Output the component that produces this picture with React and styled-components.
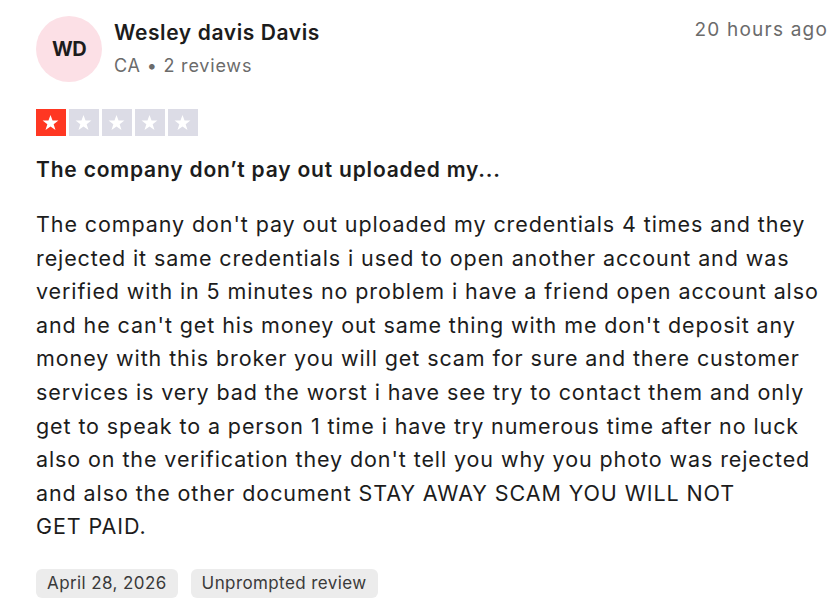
import React from "react";
import styled, { createGlobalStyle } from "styled-components";

const GlobalStyle = createGlobalStyle`
  body {
    margin: 0;
    background: #ffffff;
    font-family: Inter, "Noto Sans", sans-serif;
    color: #1c1c1c;
  }
`;

const Card = styled.div`
  width: 838px;
  height: 615px;
  box-sizing: border-box;
  padding: 16px 10px 0 36px;
  display: flex;
  flex-direction: column;
`;

const Header = styled.div`
  display: flex;
  align-items: flex-start;
  justify-content: space-between;
`;

const Consumer = styled.div`
  display: flex;
  align-items: center;
  gap: 12px;
`;

const Avatar = styled.div`
  width: 66px;
  height: 66px;
  border-radius: 50%;
  background: #fce0e6;
  display: flex;
  align-items: center;
  justify-content: center;
  font-size: 20px;
  font-weight: 700;
  color: #1c1c1c;
  letter-spacing: -0.5px;
`;

const NameBlock = styled.div`
  display: flex;
  flex-direction: column;
  gap: 10px;
  margin-top: -3px;
`;

const Name = styled.div`
  font-size: 21px;
  font-weight: 600;
  letter-spacing: 0.6px;
  color: #1c1c1c;
`;

const Meta = styled.div`
  font-size: 18px;
  letter-spacing: 0.8px;
  color: #6b6b6b;
`;

const Time = styled.div`
  font-size: 19px;
  letter-spacing: 1.2px;
  color: #6b6b6b;
  margin-top: 2px;
`;

const Stars = styled.div`
  display: flex;
  gap: 3.5px;
  margin-top: 27px;
`;

const StarBox = styled.div`
  width: 29.5px;
  height: 27px;
  background: ${(p) => (p.filled ? "#ff3722" : "#dcdce6")};
  display: flex;
  align-items: center;
  justify-content: center;
`;

const Title = styled.h2`
  margin: 21px 0 0;
  font-size: 21px;
  font-weight: 600;
  letter-spacing: 0.8px;
  color: #1c1c1c;
`;

const Body = styled.p`
  margin: 26px 0 0;
  font-size: 21.5px;
  line-height: 33.6px;
  letter-spacing: 0.9px;
  color: #1c1c1c;
  white-space: nowrap;
`;

const Tags = styled.div`
  display: flex;
  gap: 13px;
  margin-top: 25px;
`;

const Tag = styled.span`
  background: #ececec;
  border-radius: 6px;
  padding: 0 11px;
  height: 29px;
  display: flex;
  align-items: center;
  font-size: 17px;
  letter-spacing: 0.4px;
  color: #3a3a3a;
`;

const Star = () => (
  <svg width="19" height="19" viewBox="0 0 24 24">
    <path
      fill="#ffffff"
      d="M12 2.5l2.6 7.1h7.4l-6 4.5 2.3 7.4L12 17l-6.3 4.5L8 14.1 2 9.6h7.4z"
    />
  </svg>
);

const lines = [
  "The company don't pay out uploaded my credentials 4 times and they",
  "rejected it same credentials i used to open another account and was",
  "verified with in 5 minutes no problem i have a friend open account also",
  "and he can't get his money out same thing with me don't deposit any",
  "money with this broker you will get scam for sure and there customer",
  "services is very bad the worst i have see try to contact them and only",
  "get to speak to a person 1 time i have try numerous time after no luck",
  "also on the verification they don't tell you why you photo was rejected",
  "and also the other document STAY AWAY SCAM YOU WILL NOT",
  "GET PAID.",
];

export default function App() {
  return (
    <>
      <GlobalStyle />
      <Card>
        <Header>
          <Consumer>
            <Avatar>WD</Avatar>
            <NameBlock>
              <Name>Wesley davis Davis</Name>
              <Meta>CA • 2 reviews</Meta>
            </NameBlock>
          </Consumer>
          <Time>20 hours ago</Time>
        </Header>
        <Stars>
          {[0, 1, 2, 3, 4].map((i) => (
            <StarBox key={i} filled={i < 1}>
              <Star />
            </StarBox>
          ))}
        </Stars>
        <Title>The company don’t pay out uploaded my...</Title>
        <Body>
          {lines.map((l, i) => (
            <React.Fragment key={i}>
              {l}
              {i < lines.length - 1 && <br />}
            </React.Fragment>
          ))}
        </Body>
        <Tags>
          <Tag>April 28, 2026</Tag>
          <Tag>Unprompted review</Tag>
        </Tags>
      </Card>
    </>
  );
}
